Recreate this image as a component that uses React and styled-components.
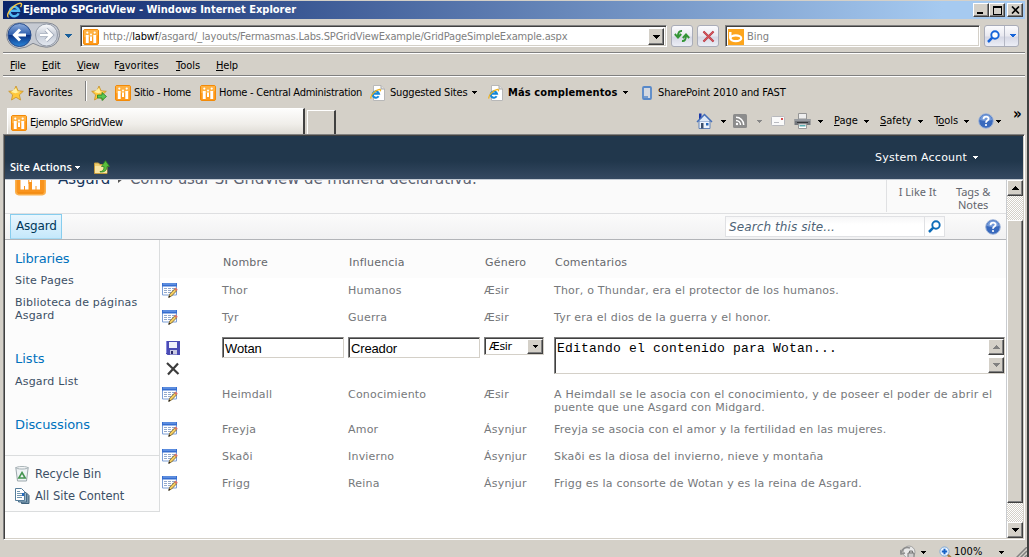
import React from "react";
import styled, { createGlobalStyle, css } from "styled-components";

const Global = createGlobalStyle`
  * { box-sizing: border-box; }
  body { margin: 0; overflow: hidden; background: #d4d0c8; }
`;
const ui = `"DejaVu Sans Condensed", "DejaVu Sans", sans-serif`;
const page = `"DejaVu Sans", sans-serif`;

const Window = styled.div`
  width: 1029px; height: 557px; overflow: hidden; background: #d4d0c8;
  border-right: 2px solid #404040; padding: 1px 2px 0 3px;
  display: flex; flex-direction: column; font: 11px/14px ${ui}; color: #000;
  svg { display: block; flex: none; }
`;
const Label = styled.span`
  display: block; flex: none; white-space: nowrap;
  width: ${p => (p.$w ? p.$w + "px" : "auto")};
  margin-left: ${p => p.$ml || 0}px;
  letter-spacing: ${p => p.$ls || 0}px;
  font-weight: ${p => (p.$bold ? 700 : "inherit")};
  color: ${p => p.$c || "inherit"};
  u { text-underline-offset: 1px; text-decoration-thickness: 1px; }
`;
const Black = styled.span`color: #000;`;
const Gap = styled.span`flex: none; width: ${p => p.$w}px;`;
const Grow = styled.span`flex: 1;`;

const TitleBar = styled.div`
  height: 18px; flex: none; display: flex; align-items: center; padding: 0 2px 0 3px;
  background: linear-gradient(90deg, #0a246a, #a6caf0 92%); color: #fff;
`;
const CaptionButton = styled.span`
  width: 16px; height: 14px; background: #d4d0c8; border: 1px solid;
  border-color: #fff #404040 #404040 #fff; box-shadow: inset -1px -1px #808080;
  margin-left: ${p => p.$ml || 0}px;
  display: flex; align-items: center; justify-content: center;
`;
const NavBar = styled.div`
  height: 35px; flex: none; display: flex; align-items: flex-start; padding: 3px 6px 0 3px;
  border-bottom: 1px solid #fff; box-shadow: inset 0 -1px #808080;
`;
const HistoryDrop = styled.span`margin: 12px 0 0 4px; width: 9px;`;
const Field = styled.div`
  width: ${p => p.$w}px; height: 22px; margin: 3px 0 0 ${p => p.$ml}px; background: #fff;
  border: 1px solid; border-color: #808080 #fff #fff #808080;
  box-shadow: inset 1px 1px #404040, inset -1px -1px #d4d0c8;
  display: flex; align-items: center; padding: 1px 2px 0 2px; color: #808080;
`;
const DropButton = styled.span`
  width: 16px; height: ${p => p.$h || 17}px; background: #d4d0c8; border: 1px solid;
  border-color: #fff #404040 #404040 #fff; box-shadow: inset -1px -1px #808080;
  display: flex; flex: none; align-items: center; justify-content: center;
`;
const ToolButton = styled.span`
  width: ${p => p.$w || 22}px; height: 22px; margin: 3px 0 0 ${p => p.$ml}px;
  border: 1px solid #a9acb8; border-radius: 3px; flex: none;
  background: linear-gradient(#fbfbfd, #e9e9f0 50%, #d6d8e5 55%, #eceef6);
  display: flex; align-items: center; justify-content: space-around;
`;
const ButtonSplit = styled.span`width: 1px; height: 20px; background: #b4b7c4;`;
const MenuBar = styled.div`
  height: 23px; flex: none; display: flex; align-items: center; padding: 1px 0 0 7px;
  border-bottom: 1px solid #fff; box-shadow: inset 0 -1px #808080;
`;
const FavBar = styled.div`
  height: 31px; flex: none; display: flex; align-items: center; padding-left: 5px;
`;
const Divider = styled.span`
  width: 2px; height: 20px; margin-left: ${p => p.$ml}px; margin-bottom: 4px;
  background: #808080; border-right: 1px solid #fff;
`;
const TabRow = styled.div`
  height: 26px; flex: none; display: flex; align-items: flex-end; padding-left: 4px;
`;
const Tab = styled.div`
  width: 298px; height: 26px; border: 1px solid #fff; border-bottom: 0; border-right: 2px solid #404040;
  background: linear-gradient(#fdfdfc, #f0eeea 60%, #dedbd4);
  display: flex; align-items: center; padding: 2px 0 0 3px;
`;
const NewTab = styled.div`
  width: 29px; height: 24px; margin-left: 2px; border: 1px solid #fff; border-bottom: 0; border-right: 2px solid #404040;
`;
const Commands = styled.div`
  flex: 1; display: flex; align-items: center; height: 26px; padding-left: 360px;
`;
const Chevron = styled.span`font: 700 15px/10px ${ui}; margin: -15px 0 0 12px;`;

const Viewport = styled.div`
  height: 406px; flex: none; border: 1px solid #808080; border-right-color: #fff; border-bottom-color: #fff;
  box-shadow: inset 1px 1px #404040, inset -1px -1px #d4d0c8; padding: 1px;
  display: flex; flex-direction: column; font: 11px/13px ${page};
`;
const Ribbon = styled.div`
  height: 44px; flex: none; background: linear-gradient(#21374c 58%, #354961); border-bottom: 1px solid #c5ccd4;
  color: #fff; display: flex; padding: 0 45px 0 5px;
`;
const SiteActions = styled.div`
  display: flex; align-items: center; height: 20px; margin-top: 21px; font: 600 11px/14px "Open Sans", sans-serif;
`;
const Account = styled.div`display: flex; align-items: center; height: 14px; margin-top: 14px;`;
const Body = styled.div`flex: 1; min-height: 0; display: flex;`;
const Content = styled.div`width: 1001px; flex: none; background: #fff;`;
const TitleArea = styled.div`
  height: 34px; background: #fafafa; border-bottom: 1px solid #dedfe1; display: flex; overflow: hidden; padding-left: 10px;
`;
const LogoBox = styled.div`margin-top: -16px; flex: none;`;
const Crumb = styled.div`
  display: flex; align-items: center; height: 20px; margin: -11px 0 0 12px; font-size: 15px; color: #5e6472; width: 829px;
`;
const Social = styled.div`
  height: 32px; width: 120px; border-left: 1px solid #e0e1e3; display: flex; padding-top: 5px; color: #62666e;
  text-align: center; font: 11px/13px "Noto Sans", sans-serif;
`;
const NavArea = styled.div`
  height: 26px; background: linear-gradient(#fbfbfb, #f1f1f2); border-bottom: 1px solid #b2b4b8;
  display: flex; align-items: flex-start; padding-left: 5px;
`;
const SiteTab = styled.div`
  width: 52px; height: 25px; border: 1px solid #86cdee; border-bottom-color: #a5d9f2; padding: 5px 0 0 5px;
  background: linear-gradient(#e9f6fe, #c5e8fb); color: #003759; font-size: 12px; letter-spacing: -0.2px;
`;
const SearchBox = styled.div`
  width: 220px; height: 21px; margin: 2px 0 0 663px; border: 1px solid #e0e1e4; background: linear-gradient(#f6f6f7, #fff 40%);
  display: flex; align-items: center; padding-left: 3px; font: italic 12px/14px ${page}; color: #4e6376;
`;
const SearchIcon = styled.span`
  width: 21px; height: 19px; border-left: 1px solid #e0e1e4; display: flex; align-items: center; justify-content: center;
`;
const HelpSlot = styled.span`margin: 5px 0 0 40px;`;
const Main = styled.div`display: flex;`;
const Side = styled.div`
  width: 155px; height: 272px; border-right: 1px solid #dbddde; border-bottom: 1px solid #dbddde; background: #fcfcfc;
  padding: 11px 0 0 10px; color: #3b4f65;
`;
const Heading = styled.div`font-size: 13px; line-height: 15px; color: #0072bc; letter-spacing: ${p => p.$ls || 0}px; margin-top: ${p => p.$mt || 0}px;`;
const SideLink = styled.div`margin-top: ${p => p.$mt}px; letter-spacing: 0.2px; white-space: pre;`;
const SideFoot = styled.div`
  border-top: 1px solid #dbddde; margin: 23px 0 0 -10px; padding: 9px 0 0 10px; display: flex; flex-direction: column; gap: 4px;
`;
const FootLink = styled.div`display: flex; align-items: center; gap: ${p => p.$gap}px; height: 18px; font-size: 11.5px;`;

const Table = styled.div`flex: 1;`;
const Row = styled.div`
  display: grid; grid-template-columns: 62px 126px 136px 70px 1fr; height: ${p => p.$h}px;
  padding: ${p => p.$pt}px 0 0 ${p => (p.$head ? 1 : 0)}px;
  color: ${p => (p.$head ? "#66686c" : "#76787b")}; background: ${p => (p.$head ? "#fcfcfc" : "#fff")};
`;
const Cell = styled.div`white-space: pre; letter-spacing: 0.21px;`;
const IconCell = styled.div`padding-left: ${p => p.$pl || 2}px; margin-top: ${p => p.$mt || 0}px; display: flex; flex-direction: column; gap: 7px;`;
const sunken = css`
  border: 1px solid; border-color: #808080 #d4d0c8 #d4d0c8 #808080; box-shadow: inset 1px 1px #404040; background: #fff; color: #000;
`;
const Input = styled.div`
  ${sunken} width: ${p => p.$w}px; height: 21px; padding: 3px 0 0 2px;
  font: 13px/15px "Liberation Sans", sans-serif; letter-spacing: -0.15px;
`;
const Select = styled.div`
  ${sunken} width: 60px; height: 18px; display: flex; align-items: center; justify-content: space-between; padding: 1px 0 0 4px; letter-spacing: -0.3px;
`;
const TextArea = styled.div`
  ${sunken} width: 451px; height: 37px; display: flex; justify-content: space-between; padding: 1px 0 0 2px;
  font: 13px/15px "Liberation Mono", monospace; letter-spacing: 0.2px;
`;
const AreaText = styled.span`padding-top: 2px;`;
const AreaScroll = styled.div`display: flex; flex-direction: column; justify-content: space-between; height: 34px;`;
const Scroll = styled.div`
  width: 17px; flex: none; display: flex; flex-direction: column; border-left: 1px solid #c9ccd0;
  background: repeating-conic-gradient(#fff 0 25%, #d4d0c8 0 50%) 0 0 / 2px 2px;
`;
const Thumb = styled.div`
  height: 283px; margin-top: 24px; background: #d4d0c8; border: 1px solid; border-color: #fff #404040 #404040 #fff;
  box-shadow: inset -1px -1px #808080;
`;
const Status = styled.div`flex: 1; display: flex; align-items: center; padding: 5px 0 0 897px;`;

const Arrow = ({ c = "#000", up, w = 7 }) => (
  <svg width={w} height="4" viewBox="0 0 7 4" shapeRendering="crispEdges">
    <path d={up ? "M0 4h7L3.5 0z" : "M0 0h7L3.5 4z"} fill={c} />
  </svg>
);
const Caret = ({ c = "#000" }) => <svg width="5" height="3" viewBox="0 0 5 3" shapeRendering="crispEdges"><path d="M0 0h5v1h-1v1h-1v1h-1v-1h-1v-1h-1z" fill={c} /></svg>;

const People = () => (
  <svg width="16" height="16" viewBox="0 0 16 16">
    <rect x=".5" y=".5" width="15" height="15" rx="1.5" fill="#ff9a1c" stroke="#f28a08" />
    <path d="M1 1h14v5q-7 3-14 2z" fill="#ffb142" />
    <g fill="#fff">
      <circle cx="4.300" cy="3.600" r="1.100" /><circle cx="8" cy="5.600" r="1" /><circle cx="11.700" cy="3.600" r="1.100" />
      <path d="M2.800 6h2.900v8H2.800zM10.300 6h2.900v8h-2.900zM7 7.500h2V12H7z" />
    </g>
  </svg>
);
const BigLogo = () => (
  <svg width="31" height="32" viewBox="0 0 31 32">
    <rect x=".8" y="1" width="29.400" height="29.600" rx="3" fill="#f9941d" stroke="#fbb04c" strokeWidth="1.600" />
    <path d="M3 29h25" stroke="#ef860c" />
    <path d="M5.500 13h8v12.500h-8zM17 13h8v12.500h-8z" fill="#fff" />
    <path d="M9.500 22v4M21 22v4" stroke="#f9941d" />
    <path d="M13.500 13h3.500v7h-3.500z" fill="#f9941d" /><path d="M14.300 13h2v5h-2z" fill="#fff" />
  </svg>
);
const IE = () => (
  <svg width="17" height="17" viewBox="0 0 17 17">
    <path d="M12.700 11.400A4.700 4.700 0 1 1 13 8.700H5" fill="none" stroke="#51b9f2" strokeWidth="2.400" />
    <path d="M2.500 15.500C-1.500 13 8 2 14 1.300c2.500-.1 1.500 2.200.6 3.800" fill="none" stroke="#f6c644" strokeWidth="1.400" />
  </svg>
);
const IEPage = () => (
  <svg width="16" height="16" viewBox="0 0 16 16">
    <path d="M3.500.5h7.500l3.500 3.500v11.500h-11z" fill="#fff" stroke="#b8b8b8" /><path d="M11 .5V4h3.500" fill="#ddd" stroke="#a8a8a8" />
    <path d="M8.600 11.300A3.200 3.200 0 1 1 9 8.700H3.500" fill="none" stroke="#1487d8" strokeWidth="2" />
    <path d="M1.200 13.500C-.5 11.500 5 5 9.500 4.300q1.500 0 .7 2" fill="none" stroke="#eeb321" strokeWidth="1.300" />
  </svg>
);
const NavButtons = () => (
  <svg width="54" height="27" viewBox="0 0 54 27">
    <defs>
      <linearGradient id="bk" x2="0" y2="1"><stop stopColor="#8faede" /><stop offset=".48" stopColor="#2f5fae" /><stop offset=".52" stopColor="#0c3485" /><stop offset="1" stopColor="#2a86da" /></linearGradient>
      <linearGradient id="fw" x2="0" y2="1"><stop stopColor="#fafbfd" /><stop offset=".5" stopColor="#c6ccd7" /><stop offset="1" stopColor="#e4e9f1" /></linearGradient>
    </defs>
    <path d="M13 .8h28q13 1 12.500 13-2 11-13 11.500-7-.5-13.500-4-7 5-14 5.200Q1 24 .6 13 1 2 13 .8z" fill="#c6cad2" stroke="#858a94" />
    <circle cx="13.500" cy="13" r="11.500" fill="url(#bk)" stroke="#274c8c" /><circle cx="40.500" cy="13" r="11" fill="url(#fw)" stroke="#9299a6" />
    <path d="M20 13H9m5-5.500L8.500 13l5.500 5.500" fill="none" stroke="#fff" strokeWidth="3" />
    <path d="M34 13h11m-5-5.500 5.500 5.500-5.500 5.500" fill="none" stroke="#9ba4b5" strokeWidth="4.200" />
    <path d="M34 13h11m-5-5.500 5.500 5.500-5.500 5.500" fill="none" stroke="#fff" strokeWidth="2.700" />
  </svg>
);
const Refresh = () => (
  <svg width="18" height="16" viewBox="0 0 18 16" fill="none" stroke="#349537" strokeWidth="1.900">
    <path d="M9 3Q5 2.500 5 8.500M1.800 6 5 9.500 8.200 6" /><path d="M9 13q4 .5 4-5.500M9.800 10 13 6.500l3.200 3.500" />
  </svg>
);
const Stop = () => <svg width="13" height="13" viewBox="0 0 13 13"><path d="m1.500 1.500 10 10M11.500 1.500l-10 10" stroke="#a83a42" strokeWidth="2.200" /><path d="m1.500 1.500 10 10M11.500 1.500l-10 10" stroke="#d8545c" strokeWidth="1.200" /></svg>;
const Bing = () => <svg width="16" height="16" viewBox="0 0 16 16"><rect width="16" height="16" fill="#fca51d" /><path d="M2.300 3v6.500" stroke="#fff" strokeWidth="2.400" /><ellipse cx="7.800" cy="9.300" rx="5.400" ry="2.900" fill="none" stroke="#fff" strokeWidth="2.200" /></svg>;
const Magnifier = ({ c = "#1664d9" }) => <svg width="13" height="13" viewBox="0 0 13 13"><circle cx="8" cy="5" r="3.700" fill="#fff" stroke={c} strokeWidth="1.900" /><path d="M5.300 7.700 1 12" stroke={c} strokeWidth="2.500" /></svg>;
const Star = ({ add }) => (
  <svg width="16" height="16" viewBox="0 0 16 16">
    <path d="m8 1 2.100 4.800 5.200.5-3.900 3.500 1.100 5.200L8 12.300 3.500 15l1.100-5.200L.7 6.300l5.200-.5z" fill="#ffc83a" stroke="#c8922a" strokeWidth=".8" />
    <path d="m8 3 1.400 3.500 3 .2-5 1.500L3 7z" fill="#fff0a0" />
    {add && <path d="M6.500 10h4.500V7.500l4.500 4-4.500 4V13H6.500z" fill="#5ac754" stroke="#238228" strokeWidth=".8" />}
  </svg>
);
const Device = () => <svg width="10" height="14" viewBox="0 0 10 14"><rect x="1" y="1" width="8" height="12" rx="1" fill="#d4d8e0" stroke="#5788c9" strokeWidth="1.800" /><path d="M2 11h4" stroke="#5788c9" strokeWidth="1.500" /></svg>;
const Home = () => (
  <svg width="17" height="16" viewBox="0 0 17 16">
    <path d="M3 .5h2.500V6H3z" fill="#1936a8" /><path d="M3 8h11v7.500H3z" fill="#edf3fc" stroke="#6383b8" /><path d="m3 8 5.500-6L14 8z" fill="#dce7f6" /><path d="m1 9 7.500-7.500L16 9" fill="none" stroke="#456fb8" strokeWidth="1.500" /><path d="M5 10h2.500v5.500H5z" fill="#3c506e" /><path d="M10 10h2.500v2.500H10z" fill="#2466b8" />
  </svg>
);
const Rss = () => <svg width="14" height="14" viewBox="0 0 14 14"><rect width="14" height="14" rx="1.500" fill="#8c8c8c" /><g fill="none" stroke="#fff" strokeWidth="1.500"><path d="M3 6.500A4.500 4.500 0 0 1 7.500 11M3 3.300A7.700 7.700 0 0 1 10.700 11" /></g><circle cx="4" cy="10" r="1.200" fill="#fff" /></svg>;
const Mail = () => <svg width="14" height="10" viewBox="0 0 14 10"><rect x=".5" y=".5" width="13" height="9" rx="1" fill="#fafafa" stroke="#b8b9bd" /><path d="M10 2h2v2h-2z" fill="#d84f50" /><path d="M3 6.500h5" stroke="#b9bbc0" /></svg>;
const Printer = () => <svg width="17" height="16" viewBox="0 0 17 16"><path d="M4.500.5h8V6h-8z" fill="#eee" stroke="#959595" /><path d="M.5 6h16v6H.5z" fill="#73777c" /><path d="M1 7h15" stroke="#b9bdc3" /><path d="M3 9.500h11" stroke="#33363a" /><path d="M4.500 11h8v4.500h-8z" fill="#fff" stroke="#999" /><path d="M5.500 12h6v1.500h-6z" fill="#58aeb2" /></svg>;
const Help = () => <svg width="16" height="16" viewBox="0 0 16 16"><circle cx="8" cy="8" r="7.300" fill="#3869bd" stroke="#a2b6d9" /><path d="M2 7a6 5.500 0 0 1 12 0q-6 2-12 0z" fill="#7399d8" /><path d="M5.500 6.200C5.500 2.800 11 3 10.600 6 10.300 7.700 8 7.500 8 9.700" fill="none" stroke="#fff" strokeWidth="1.800" /><circle cx="8" cy="12" r="1.100" fill="#fff" /></svg>;
const FolderUp = () => <svg width="16" height="14" viewBox="0 0 16 14"><path d="M.5 3h4l1.500 1.500h7v9H.5z" fill="#efcf70" stroke="#c39a3d" /><path d="M1 6h12v7H1z" fill="#f9e5a2" /><path d="M6 11.500q4 .3 4-5H7.500L11.500.7l4 5.800H13q0 6-7 5.500z" fill="#5abf3c" stroke="#2e8625" strokeWidth=".8" /></svg>;
const Edit = () => (
  <svg width="16" height="15" viewBox="0 0 16 15">
    <path d="M.5.5h14v11.500H.5z" fill="#fff" stroke="#7d9fd6" /><path d="M0 0h15v3.500H0z" fill="#366ed0" /><path d="M1 1h13" stroke="#81abed" />
    <path d="M2 5.500h11M2 7.500h10M2 9.500h8" stroke="#93a9cc" strokeDasharray="3 1" />
    <path d="m6.800 14.200.9-3L12.600 6l2 1.800-5 5.200z" fill="#f6cf60" stroke="#6b5626" strokeWidth=".8" /><path d="m12.300 6 1.400-1.500 2 2-1.300 1.500z" fill="#de7268" /><path d="m6.300 14.700.8-2 1.300 1.300z" fill="#111" />
  </svg>
);
const Save = () => <svg width="14" height="14" viewBox="0 0 14 14"><path d="M0 0h14v14H1.500L0 12.500z" fill="#4a4bb4" /><path d="M3 1h8v6H3z" fill="#eff0fb" /><path d="M4 9h7v4.500H4z" fill="#c9cae2" /><path d="M5 10h2v3H5z" fill="#292968" /><path d="M.5 0v12" stroke="#8789df" /></svg>;
const Cancel = () => <svg width="14" height="14" viewBox="0 0 14 14"><path d="m1 1 11.500 11M12 1.500 2 12.500" stroke="#3c3c3c" strokeWidth="2.200" /></svg>;
const Bin = () => <svg width="14" height="16" viewBox="0 0 14 16"><path d="M.8 1.500h12.400L11.500 15h-9z" fill="#eff3f5" stroke="#9ba7ac" /><ellipse cx="7" cy="1.800" rx="6" ry="1.200" fill="#fff" stroke="#a1adb1" /><path d="m7 6.500 3.200 5.500H3.800z" fill="none" stroke="#459450" strokeWidth="1.600" /></svg>;
const Docs = () => <svg width="15" height="16" viewBox="0 0 15 16"><path d="M6.500 4.500h4.500l3 3v8H6.500z" fill="#7b98ad" stroke="#3e6079" /><path d="M3.500 2.500h5l3 3V14h-8z" fill="#9eb7c8" stroke="#466b87" /><path d="M.5.500h6l3 3v9h-9z" fill="#fff" stroke="#567d9a" /><path d="M2 3.500h3M2 5.500h5M2 7.500h5M2 9.500h5" stroke="#7195af" /><path d="M7 5h2v3H7z" fill="#256abd" /></svg>;
const Privacy = () => <svg width="16" height="14" viewBox="0 0 16 14"><circle cx="9" cy="7" r="6" fill="#e8e8e8" stroke="#a2a2a2" /><path d="M1 8q2-7 9-5M0 5l1 4 4-1" fill="none" stroke="#8e8e8e" strokeWidth="1.500" /><path d="M8 8h6v5H8zM9.500 8V6h3v2" fill="#ccc" stroke="#777" /></svg>;
const Zoom = () => <svg width="13" height="13" viewBox="0 0 13 13"><path d="m8 8 4 4" stroke="#a9793c" strokeWidth="2.300" /><circle cx="5.500" cy="5.500" r="4.600" fill="#e6f2ff" stroke="#81a9d5" /><path d="M5.500 2.800v5.400M2.800 5.500h5.400" stroke="#1762c6" strokeWidth="2" /></svg>;

const rows = [
  ["Thor", "Humanos", "Æsir", "Thor, o Thundar, era el protector de los humanos.", 27],
  ["Tyr", "Guerra", "Æsir", "Tyr era el dios de la guerra y el honor.", 26],
  null,
  ["Heimdall", "Conocimiento", "Æsir", "A Heimdall se le asocia con el conocimiento, y de poseer el poder de abrir el\npuente que une Asgard con Midgard.", 35],
  ["Freyja", "Amor", "Ásynjur", "Freyja se asocia con el amor y la fertilidad en las mujeres.", 27],
  ["Skaði", "Invierno", "Ásynjur", "Skaði es la diosa del invierno, nieve y montaña", 27],
  ["Frigg", "Reina", "Ásynjur", "Frigg es la consorte de Wotan y es la reina de Asgard.", 27],
];

function GridRow({ data }) {
  if (!data) {
    return (
      <Row $h={51} $pt={6}>
        <IconCell $pl={6} $mt={4}><Save /><Cancel /></IconCell>
        <Input $w={122}>Wotan</Input>
        <Input $w={132}>Creador</Input>
        <Select>Æsir<DropButton $h={15}><Caret /></DropButton></Select>
        <TextArea>
          <AreaText>Editando el contenido para Wotan...</AreaText>
          <AreaScroll><DropButton $h={16}><Arrow up c="#808080" /></DropButton><DropButton $h={16}><Arrow c="#808080" /></DropButton></AreaScroll>
        </TextArea>
      </Row>
    );
  }
  return (
    <Row $h={data[4]} $pt={6}>
      <IconCell $mt={-1}><Edit /></IconCell>
      {data.slice(0, 4).map((t, i) => <Cell key={i}>{t}</Cell>)}
    </Row>
  );
}

export default function App() {
  return (
    <Window>
      <Global />
      <TitleBar>
        <IE /><Label $bold>Ejemplo SPGridView - Windows Internet Explorer</Label><Grow />
        <CaptionButton><svg width="8" height="8"><path d="M0 6h6v2H0z" /></svg></CaptionButton>
        <CaptionButton><svg width="9" height="9" shapeRendering="crispEdges"><path d="M0 0h9v9H0zM1 2v6h7V2z" fillRule="evenodd" /></svg></CaptionButton>
        <CaptionButton $ml={2}><svg width="9" height="8"><path d="m1 .5 7 7M8 .5l-7 7" stroke="#000" strokeWidth="1.600" /></svg></CaptionButton>
      </TitleBar>
      <NavBar>
        <NavButtons />
        <HistoryDrop><Arrow c="#185f9c" w={9} /></HistoryDrop>
        <Field $w={587} $ml={7}><People /><Label $ml={4} $ls={-0.16}>http://<Black>labwf</Black>/asgard/_layouts/Fermasmas.Labs.SPGridViewExample/GridPageSimpleExample.aspx</Label><Grow /><DropButton><Arrow /></DropButton></Field>
        <ToolButton $ml={4}><Refresh /></ToolButton>
        <ToolButton $ml={4}><Stop /></ToolButton>
        <Field $w={255} $ml={6}><Bing /><Label $ml={3}>Bing</Label></Field>
        <ToolButton $w={35} $ml={4}><Magnifier /><ButtonSplit /><Arrow w={6} c="#1664d9" /></ToolButton>
      </NavBar>
      <MenuBar>
        <Label $w={32} $ls={-0.2}><u>F</u>ile</Label><Label $w={35} $ls={-0.2}><u>E</u>dit</Label><Label $w={37} $ls={-0.3}><u>V</u>iew</Label>
        <Label $w={62}>F<u>a</u>vorites</Label><Label $w={40}><u>T</u>ools</Label><Label $ls={-0.2}><u>H</u>elp</Label>
      </MenuBar>
      <FavBar>
        <Star /><Label $ml={4} $w={54}>Favorites</Label><Divider $ml={3} /><Gap $w={4} /><Star add /><Gap $w={8} />
        <People /><Label $ml={3} $w={66} $ls={-0.33}>Sitio - Home</Label><People /><Label $ml={3} $w={151} $ls={-0.26}>Home - Central Administration</Label>
        <IEPage /><Label $ml={4} $w={82} $ls={-0.17}>Suggested Sites</Label><Caret /><Gap $w={11} />
        <IEPage /><Label $bold $ml={4} $w={115} $ls={0.12}>Más complementos</Label><Caret /><Gap $w={14} />
        <Device /><Label $ml={6} $ls={-0.1}>SharePoint 2010 and FAST</Label>
      </FavBar>
      <TabRow>
        <Tab><People /><Label $ml={3} $ls={-0.38}>Ejemplo SPGridView</Label></Tab><NewTab />
        <Commands>
          <Home /><Gap $w={8} /><Caret /><Gap $w={7} /><Rss /><Gap $w={10} /><Caret c="#888" /><Gap $w={9} /><Mail /><Gap $w={9} /><Printer /><Gap $w={7} /><Caret /><Gap $w={11} />
          <Label $w={30}><u>P</u>age</Label><Caret /><Gap $w={11} /><Label $w={38}><u>S</u>afety</Label><Caret /><Gap $w={11} /><Label $w={30}>T<u>o</u>ols</Label><Caret /><Gap $w={9} /><Help /><Gap $w={2} /><Caret /><Chevron>»</Chevron>
        </Commands>
      </TabRow>
      <Viewport>
        <Ribbon>
          <SiteActions><Label $w={65}>Site Actions</Label><Caret c="#fff" /><Gap $w={14} /><FolderUp /></SiteActions><Grow />
          <Account><Label $w={98} $ls={0.22}>System Account</Label><Caret c="#fff" /></Account>
        </Ribbon>
        <Body>
          <Content>
            <TitleArea>
              <LogoBox><BigLogo /></LogoBox>
              <Crumb><Label $w={60} $c="#17365d">Asgard</Label><svg width="5" height="8"><path d="m0 0 5 4-5 4z" fill="#555" /></svg><Label $ml={7} $ls={-0.1}>Como usar SPGridView de manera declarativa.</Label></Crumb>
              <Social><Label $w={61}>I Like It</Label><Label $w={50}>Tags &amp;<br />Notes</Label></Social>
            </TitleArea>
            <NavArea>
              <SiteTab>Asgard</SiteTab>
              <SearchBox><Label $w={195} $ls={0.1}>Search this site...</Label><SearchIcon><Magnifier c="#0d6cb8" /></SearchIcon></SearchBox>
              <HelpSlot><Help /></HelpSlot>
            </NavArea>
            <Main>
              <Side>
                <Heading $ls={-0.2}>Libraries</Heading>
                <SideLink $mt={8}>Site Pages</SideLink>
                <SideLink $mt={9}>{"Biblioteca de páginas\nAsgard"}</SideLink>
                <Heading $mt={29}>Lists</Heading>
                <SideLink $mt={9}>Asgard List</SideLink>
                <Heading $mt={29} $ls={-0.1}>Discussions</Heading>
                <SideFoot><FootLink $gap={6}><Bin />Recycle Bin</FootLink><FootLink $gap={5}><Docs />All Site Content</FootLink></SideFoot>
              </Side>
              <Table>
                <Row $head $h={38} $pt={16}><span /><Cell>Nombre</Cell><Cell>Influencia</Cell><Cell>Género</Cell><Cell>Comentarios</Cell></Row>
                {rows.map((r, i) => <GridRow key={i} data={r} />)}
              </Table>
            </Main>
          </Content>
          <Scroll><DropButton $h={16}><Arrow up /></DropButton><Thumb /><Grow /><DropButton $h={16}><Arrow /></DropButton></Scroll>
        </Body>
      </Viewport>
      <Status>
        <Privacy /><Gap $w={5} /><Caret /><Gap $w={13} /><Zoom /><Gap $w={2} /><Label $w={45}>100%</Label><Caret /><Gap $w={12} />
        <svg width="11" height="11"><path d="M0 11 11 0M4 11l7-7M8 11l3-3" stroke="#808080" strokeWidth="1.500" /></svg>
      </Status>
    </Window>
  );
}
